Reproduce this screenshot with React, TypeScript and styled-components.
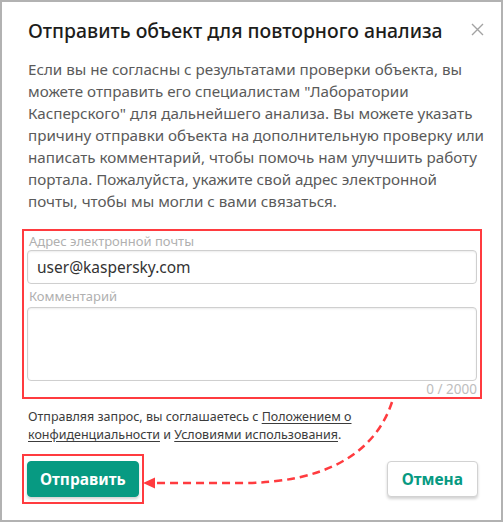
import React from "react";
import styled, { createGlobalStyle } from "styled-components";

const Global = createGlobalStyle`
  html, body {
    margin: 0;
    padding: 0;
    background: #fff;
  }
  body {
    font-family: "Noto Sans", "Liberation Sans", sans-serif;
  }
  * {
    box-sizing: border-box;
  }
`;

const Dialog = styled.div`
  position: relative;
  width: 503px;
  height: 522px;
  border: 2px solid #b2b2b2;
  background: #fff;
  padding: 15px 17px 0 26px;
  display: flex;
  flex-direction: column;
`;

const Header = styled.div`
  display: flex;
  justify-content: space-between;
  align-items: flex-start;
`;

const Title = styled.h1`
  margin: 0;
  font-size: 19.4px;
  line-height: 28px;
  font-weight: 500;
  color: #1d1d1b;
`;

const Close = styled.button`
  border: 0;
  background: none;
  padding: 0;
  margin-top: 6px;
  width: 13px;
  height: 13px;
  display: flex;
  cursor: pointer;
`;

const Intro = styled.p`
  margin: 13px 0 0;
  font-size: 15.2px;
  line-height: 22px;
  color: #5a5a5a;
  white-space: nowrap;
`;

const Highlight = styled.div<{ $pad: string }>`
  border: 2px solid #ff3b3f;
  padding: ${(p) => p.$pad};
`;

const Fields = styled(Highlight)`
  margin: 17px 0 0 -6px;
  width: 460px;
  display: flex;
  flex-direction: column;
`;

const Label = styled.label<{ $gap: number }>`
  margin-top: ${(p) => p.$gap}px;
  padding-left: 2px;
  font-size: 13px;
  line-height: 18px;
  color: #b0b0b0;
`;

const Input = styled.input`
  margin-top: 0;
  height: 34px;
  border: 1px solid #cfcfcf;
  border-radius: 4px;
  box-shadow: inset 0 1px 2px rgba(0, 0, 0, 0.08);
  padding: 0 9px;
  font-family: inherit;
  font-size: 15.5px;
  color: #333;
  outline: none;
`;

const Textarea = styled.textarea`
  margin-top: 2px;
  height: 74px;
  border: 1px solid #cfcfcf;
  border-radius: 4px;
  box-shadow: inset 0 1px 2px rgba(0, 0, 0, 0.08);
  resize: none;
  font-family: inherit;
  outline: none;
`;

const Counter = styled.div`
  text-align: right;
  font-size: 13.5px;
  line-height: 16px;
  color: #bdbdbd;
`;

const Agreement = styled.p`
  margin: 9px 0 0;
  font-size: 12.5px;
  line-height: 18px;
  color: #3c3c3c;
  white-space: nowrap;
  a {
    color: inherit;
    text-decoration: underline;
    text-underline-offset: 2px;
  }
`;

const Actions = styled.div`
  margin-top: 10px;
  margin-right: 6px;
  display: flex;
  justify-content: space-between;
  align-items: flex-start;
`;

const SubmitFrame = styled(Highlight)`
  margin-left: -6px;
`;

const Button = styled.button<{ $primary?: boolean }>`
  height: 36px;
  padding: 0 ${(p) => (p.$primary ? 12 : 14)}px;
  border-radius: 4px;
  font-family: inherit;
  font-size: 15.5px;
  font-weight: 700;
  cursor: pointer;
  border: 1px solid ${(p) => (p.$primary ? "#079a82" : "#d2d2d2")};
  background: ${(p) => (p.$primary ? "#079a82" : "#fff")};
  color: ${(p) => (p.$primary ? "#fff" : "#079a82")};
  box-shadow: 0 2px 3px rgba(0, 0, 0, 0.18);
`;

const CancelButton = styled(Button)`
  margin-top: 7px;
`;

const Arrow = styled.svg`
  position: absolute;
  left: 0;
  top: 0;
  pointer-events: none;
`;

export default function App() {
  return (
    <>
      <Global />
      <Dialog>
        <Header>
          <Title>Отправить объект для повторного анализа</Title>
          <Close aria-label="Закрыть">
            <svg width="13" height="13" viewBox="0 0 13 13">
              <path d="M1 1L12 12M12 1L1 12" stroke="#a3a3a3" strokeWidth="1.4" />
            </svg>
          </Close>
        </Header>
        <Intro>
          Если вы не согласны с результатами проверки объекта, вы
          <br />
          можете отправить его специалистам "Лаборатории
          <br />
          Касперского" для дальнейшего анализа. Вы можете указать
          <br />
          причину отправки объекта на дополнительную проверку или
          <br />
          написать комментарий, чтобы помочь нам улучшить работу
          <br />
          портала. Пожалуйста, укажите свой адрес электронной
          <br />
          почты, чтобы мы могли с вами связаться.
        </Intro>
        <Fields $pad="1px 3px 0 3px">
          <Label $gap={0}>Адрес электронной почты</Label>
          <Input defaultValue="user@kaspersky.com" />
          <Label $gap={3}>Комментарий</Label>
          <Textarea />
          <Counter>0 / 2000</Counter>
        </Fields>
        <Agreement>
          Отправляя запрос, вы соглашаетесь с <a href="#">Положением о</a>
          <br />
          <a href="#">конфиденциальности</a> и <a href="#">Условиями использования</a>.
        </Agreement>
        <Actions>
          <SubmitFrame $pad="5px 3px 5px 3px">
            <Button $primary>Отправить</Button>
          </SubmitFrame>
          <CancelButton>Отмена</CancelButton>
        </Actions>
        <Arrow width="503" height="522" viewBox="0 0 503 522">
          <path
            d="M390 400 C 373 452, 322 481, 240 481 L 152 481"
            fill="none"
            stroke="#ff3b3f"
            strokeWidth="2.5"
            strokeDasharray="8 5"
          />
          <path d="M141 481 L 153 475.5 L 153 486.5 Z" fill="#ff3b3f" />
        </Arrow>
      </Dialog>
    </>
  );
}
